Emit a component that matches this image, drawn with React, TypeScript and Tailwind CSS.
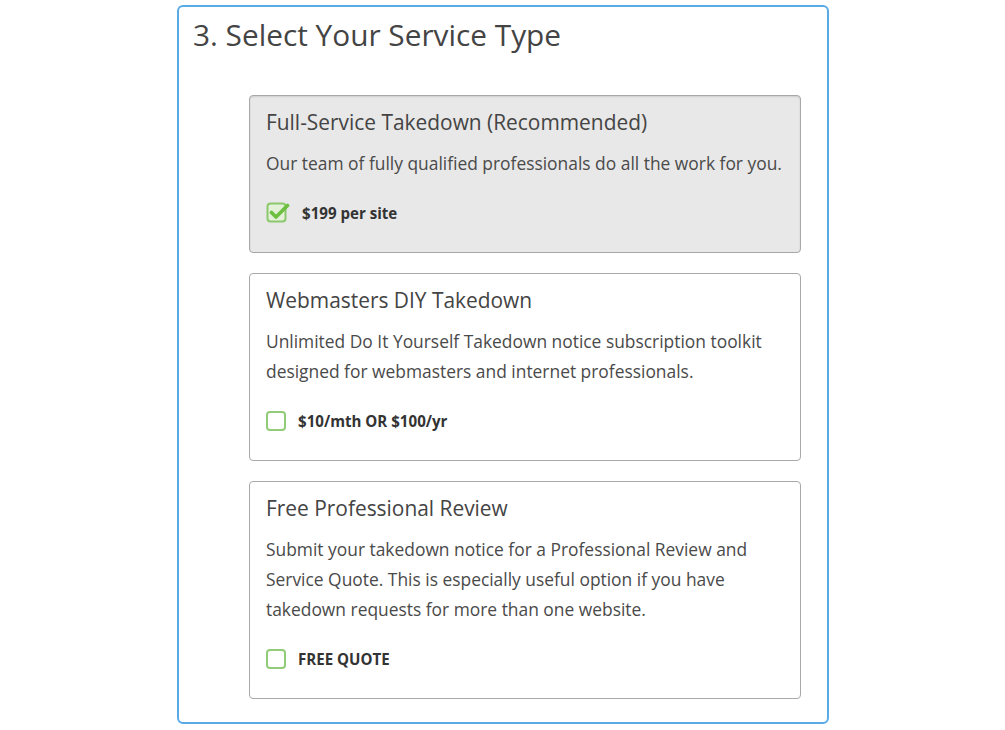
import React from "react";

function CheckBox({ checked }: { checked: boolean }) {
  if (checked) {
    return (
      <svg width="24" height="24" viewBox="0 0 24 24" className="shrink-0 -mt-[3px]">
        <rect x="1.5" y="3.5" width="18" height="18" rx="3" fill="#e3f1d8" stroke="#8cc86c" strokeWidth="2" />
        <path d="M5.5 12.5 L10 17 L21.5 5.5" fill="none" stroke="#6dbf3f" strokeWidth="3.6" strokeLinecap="round" strokeLinejoin="round" />
      </svg>
    );
  }
  return <div className="w-[20px] h-[20px] rounded-[4px] border-2 border-[#93cc78] bg-white shrink-0" />;
}

function Card({
  title,
  lines,
  price,
  checked,
}: {
  title: string;
  lines: string[];
  price: string;
  checked: boolean;
}) {
  return (
    <div
      className={
        "rounded-[4px] border pl-[16px] pr-[16px] pt-[12px] pb-[28px] " +
        (checked
          ? "bg-[#e8e8e8] border-[#a8a8a8] shadow-[inset_0_1px_2px_rgba(0,0,0,0.12)]"
          : "bg-white border-[#a9a9a9]")
      }
    >
      <div className="text-[20.9px] leading-[28px] text-[#444]">{title}</div>
      <div className="mt-[12px] text-[17.4px] leading-[30px] text-[#4a4a4a]">
        {lines.map((l, i) => (
          <div key={i} className="whitespace-nowrap">{l}</div>
        ))}
      </div>
      <div className="mt-[24px] flex items-center h-[22px] gap-[12px]">
        <CheckBox checked={checked} />
        <span className="text-[15.1px] font-bold text-[#333]">{price}</span>
      </div>
    </div>
  );
}

export default function App() {
  return (
    <div
      className="w-[1005px] h-[730px] bg-white pt-[5px]"
      style={{ fontFamily: '"Open Sans", "Noto Sans", sans-serif' }}
    >
      <div className="ml-[177px] w-[652px] h-[719px] border-2 border-[#5aaae6] rounded-[6px] pl-[14px] pr-[26px] pt-[8px]">
        <div className="text-[29.8px] leading-[40px] text-[#444]">3. Select Your Service Type</div>
        <div className="ml-[56px] mt-[40px] flex flex-col gap-[20px]">
          <Card
            title="Full-Service Takedown (Recommended)"
            lines={["Our team of fully qualified professionals do all the work for you."]}
            price="$199 per site"
            checked={true}
          />
          <Card
            title="Webmasters DIY Takedown"
            lines={[
              "Unlimited Do It Yourself Takedown notice subscription toolkit",
              "designed for webmasters and internet professionals.",
            ]}
            price="$10/mth OR $100/yr"
            checked={false}
          />
          <Card
            title="Free Professional Review"
            lines={[
              "Submit your takedown notice for a Professional Review and",
              "Service Quote. This is especially useful option if you have",
              "takedown requests for more than one website.",
            ]}
            price="FREE QUOTE"
            checked={false}
          />
        </div>
      </div>
    </div>
  );
}
